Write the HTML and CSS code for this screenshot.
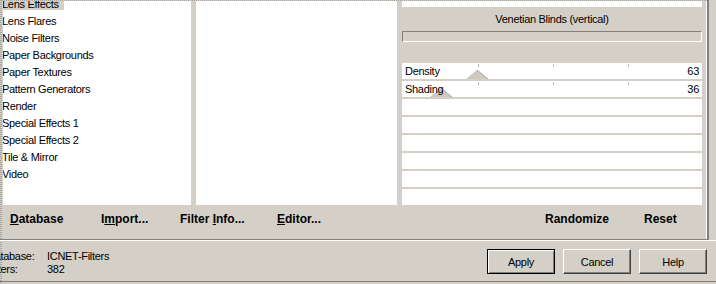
FILE: index.html
```html
<!DOCTYPE html>
<html lang="en">
<head>
    <meta charset="UTF-8">
    <title>Filters Unlimited - Venetian Blinds</title>
    <link rel="stylesheet" href="styles.css">
</head>
<body>

<div class="main">
    <div class="panes">
        <div class="list cats">
            <div class="item sel"><span>Lens Effects</span></div>
            <div class="item"><span>Lens Flares</span></div>
            <div class="item"><span>Noise Filters</span></div>
            <div class="item"><span>Paper Backgrounds</span></div>
            <div class="item"><span>Paper Textures</span></div>
            <div class="item"><span>Pattern Generators</span></div>
            <div class="item"><span>Render</span></div>
            <div class="item"><span>Special Effects 1</span></div>
            <div class="item"><span>Special Effects 2</span></div>
            <div class="item"><span>Tile &amp; Mirror</span></div>
            <div class="item"><span>Video</span></div>
        </div>
        <div class="list filters"></div>
        <div class="props">
            <div class="preview"></div>
            <div class="title">Venetian Blinds (vertical)</div>
            <div class="meter"></div>
            <div class="controls">
                <div class="ctl slider">
                    <svg class="thumb" style="left:64px" viewBox="0 0 22 9"><polygon points="0,9 11,0 22,9" fill="#cdc9c1"/><polyline points="11,0 22,9" fill="none" stroke="#aaa69e"/></svg>
                    <span class="name">Density</span><span class="val">63</span>
                </div>
                <div class="ctl slider">
                    <svg class="thumb" style="left:28px" viewBox="0 0 22 9"><polygon points="0,9 11,0 22,9" fill="#cdc9c1"/><polyline points="11,0 22,9" fill="none" stroke="#aaa69e"/></svg>
                    <span class="name">Shading</span><span class="val">36</span>
                </div>
                <div class="ctl"></div>
                <div class="ctl"></div>
                <div class="ctl"></div>
                <div class="ctl"></div>
                <div class="ctl"></div>
                <div class="ctl"></div>
            </div>
        </div>
    </div>
    <div class="actions">
        <span class="act db"><u>D</u>atabase</span>
        <span class="act imp">I<u>m</u>port...</span>
        <span class="act inf">Filter <u>I</u>nfo...</span>
        <span class="act edit"><u>E</u>ditor...</span>
        <span class="act rnd">Randomize</span>
        <span class="act rst">Reset</span>
    </div>
</div>

<div class="footer">
    <div class="info">
        <span>Database:</span><span>ICNET-Filters</span>
        <span>Filters:</span><span>382</span>
    </div>
    <div class="buttons">
        <button class="btn default">Apply</button>
        <button class="btn">Cancel</button>
        <button class="btn">Help</button>
    </div>
</div>

</body>
</html>
```

FILE: styles.css
```css
html, body {
    margin: 0;
    padding: 0;
}

body {
    width: 716px;
    height: 284px;
    overflow: hidden;
    font: 11px "Liberation Sans", Arial, sans-serif;
    letter-spacing: -0.3px;
    color: #000;
    background: repeating-linear-gradient(#a9a69f 0 1px, #d4d0c8 1px 2px) 0 0 / 2px 100% no-repeat, #d4d0c8;
}

.main {
    width: 709px;
    height: 240px;
    box-sizing: border-box;
    border-right: 2px solid #808080;
    border-bottom: 1px solid #808080;
    box-shadow: inset -1px 0 #fff;
}

.panes {
    display: flex;
    height: 205px;
    box-sizing: border-box;
    border-top: 1px dotted #a9a69f;
    padding-left: 3px;
}

.list {
    background: #fff;
    overflow: hidden;
    margin-right: 5px;
}

.cats {
    width: 188px;
}

.filters {
    width: 201px;
}

.cats .item {
    height: 17px;
    padding-top: 3px;
    box-sizing: border-box;
    white-space: nowrap;
}

.cats .item:first-child {
    margin-top: -6px;
}

.cats .item span {
    display: inline-block;
    line-height: 12px;
    margin-left: -1px;
    padding-right: 5px;
}

.cats .sel span {
    background: #d4d0c8;
}

/* right hand settings pane */
.props {
    width: 300px;
    display: flex;
    flex-direction: column;
}

.preview {
    height: 6px;
    background: #fff;
}

.title {
    height: 24px;
    line-height: 24px;
    text-align: center;
}

.meter {
    height: 11px;
    box-sizing: border-box;
    border: 1px solid;
    border-color: #808080 #fff #fff #808080;
    margin-bottom: 21px;
}

.controls {
    display: flex;
    flex-direction: column;
    gap: 2px;
}

.ctl {
    position: relative;
    height: 16px;
    line-height: 16px;
    padding: 0 3px;
    display: flex;
    justify-content: space-between;
    background: #fff;
}

.ctl.slider {
    background:
        linear-gradient(#b4b0a8, #b4b0a8) 76px 1px / 1px 3px no-repeat,
        linear-gradient(#c4c0b8, #c4c0b8) 151px 1px / 1px 3px no-repeat,
        linear-gradient(#c4c0b8, #c4c0b8) 226px 1px / 1px 3px no-repeat,
        #fff;
}

.thumb {
    position: absolute;
    top: 7px;
    width: 22px;
    height: 9px;
}

.name, .val {
    position: relative;
}

/* flat command row */
.actions {
    display: flex;
    height: 34px;
    box-sizing: border-box;
    padding-left: 10px;
    font: bold 12px "Liberation Sans", Arial, sans-serif;
    letter-spacing: 0;
    line-height: 29px;
    white-space: nowrap;
}

.act.db { width: 91px; }
.act.imp { width: 79px; }
.act.inf { width: 97px; }
.act.edit { width: 60px; }
.act.rnd { width: 99px; margin-left: auto; }
.act.rst { width: 63px; }

.footer {
    display: flex;
    height: 42px;
    box-sizing: border-box;
    border-top: 1px solid #fff;
    border-bottom: 1px solid #808080;
}

.info {
    display: grid;
    grid-template-columns: 60px auto;
    align-content: start;
    margin: 9px 0 0 -13px;
    line-height: 13px;
}

.buttons {
    display: flex;
    gap: 8px;
    margin-left: auto;
    margin-right: 9px;
    padding-top: 8px;
}

.btn {
    width: 68px;
    height: 25px;
    box-sizing: border-box;
    padding: 0;
    font: 11px "Liberation Sans", Arial, sans-serif;
    letter-spacing: -0.3px;
    color: #000;
    background: #d4d0c8;
    border: 1px solid;
    border-color: #fff #404040 #404040 #fff;
    box-shadow: inset -1px -1px #808080;
}

.btn.default {
    border-color: #000;
    box-shadow: inset 1px 1px #fff, inset -1px -1px #808080;
}
```
